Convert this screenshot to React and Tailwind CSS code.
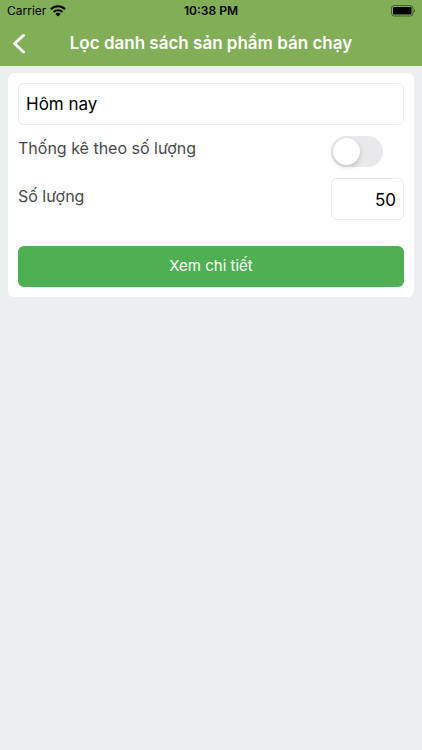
import { useState } from 'react';

const StatusBar = () => (
  <div className="grid grid-cols-3 items-center h-[22px] px-[7px] text-xs text-black">
    <div className="flex items-center gap-1">
      <span>Carrier</span>
      <svg className="w-4 h-3" viewBox="0 0 16 12" aria-hidden="true">
        <g fill="none" stroke="black" strokeWidth="2">
          <path d="M0.9 4.2a10.2 10.2 0 0 1 14.2 0" />
          <path d="M3.6 7a6.4 6.4 0 0 1 8.8 0" />
        </g>
        <path d="M8 11.6 5.4 9a3.7 3.7 0 0 1 5.2 0Z" />
      </svg>
    </div>
    <span className="text-center font-semibold whitespace-nowrap">10:38 PM</span>
    <svg className="w-[25px] h-3 justify-self-end" viewBox="0 0 25 12" aria-hidden="true">
      <rect x="1.5" y="0.5" width="21.5" height="10.5" rx="2.8" fill="none" stroke="black" strokeOpacity="0.45" />
      <rect x="3" y="2" width="18.5" height="7.5" rx="1.2" fill="black" />
      <path d="M24 4v3.6c1.2-.5 1.2-3.1 0-3.6Z" fill="black" fillOpacity="0.5" />
    </svg>
  </div>
);

const Header = () => (
  <header className="bg-[#81ae57]">
    <StatusBar />
    <div className="grid grid-cols-[40px_1fr_40px] items-center h-[44px]">
      <button type="button" aria-label="Quay lại" className="flex items-center h-full pl-3">
        <svg className="w-3.5 h-5" viewBox="0 0 14 20" fill="none" stroke="white" strokeWidth="2.8" strokeLinecap="round" strokeLinejoin="round">
          <path d="M11.5 1.4 2.5 9.6l9 8.4" />
        </svg>
      </button>
      <h1 className="text-center text-[17px] font-semibold text-white whitespace-nowrap">
        Lọc danh sách sản phẩm bán chạy
      </h1>
    </div>
  </header>
);

const App = () => {
  const [period, setPeriod] = useState('today');
  const [byQuantity, setByQuantity] = useState(false);
  const [quantity, setQuantity] = useState('50');

  return (
    <div className="min-h-screen bg-[#ebeff0] font-['Inter','Liberation_Sans',sans-serif]">
      <Header />

      <main className="px-2 pt-[7px]">
        <form className="rounded-md bg-white p-[10px]" onSubmit={(e) => e.preventDefault()}>
          <select
            aria-label="Thời gian"
            value={period}
            onChange={(e) => setPeriod(e.target.value)}
            className="block w-full h-[42px] appearance-none rounded-md border border-[#ececee] bg-white px-[7px] pt-[2px] text-[17px] text-black"
          >
            <option value="today">Hôm nay</option>
          </select>

          {/* Toggle */}
          <div className="flex justify-between mt-[11px]">
            <label htmlFor="by-quantity" className="text-base text-[#48484a]">
              Thống kê theo số lượng
            </label>
            <div className="w-[73px]">
              <input
                id="by-quantity"
                type="checkbox"
                role="switch"
                checked={byQuantity}
                onChange={(e) => setByQuantity(e.target.checked)}
                className="block w-[52px] h-[31px] appearance-none rounded-full bg-[#e9e9eb] p-0.5 before:block before:size-[27px] before:rounded-full before:bg-white before:shadow-[0_2px_5px_rgba(0,0,0,0.18)] before:transition-transform checked:bg-[#4eb052] checked:before:translate-x-[21px]"
              />
            </div>
          </div>

          {/* Quantity */}
          <div className="flex justify-between mt-[11px]">
            <label htmlFor="quantity" className="pt-[6px] text-base text-[#48484a]">
              Số lượng
            </label>
            <input
              id="quantity"
              type="text"
              inputMode="numeric"
              value={quantity}
              onChange={(e) => setQuantity(e.target.value)}
              className="w-[73px] h-[42px] rounded-md border border-[#ececee] bg-white px-[7px] pt-[2px] text-right text-[17px] text-black"
            />
          </div>

          <button type="submit" className="block w-full h-[41px] mt-[26px] rounded-md bg-[#4eb052] text-[15px] text-white">
            Xem chi tiết
          </button>
        </form>
      </main>
    </div>
  );
};

export default App;
